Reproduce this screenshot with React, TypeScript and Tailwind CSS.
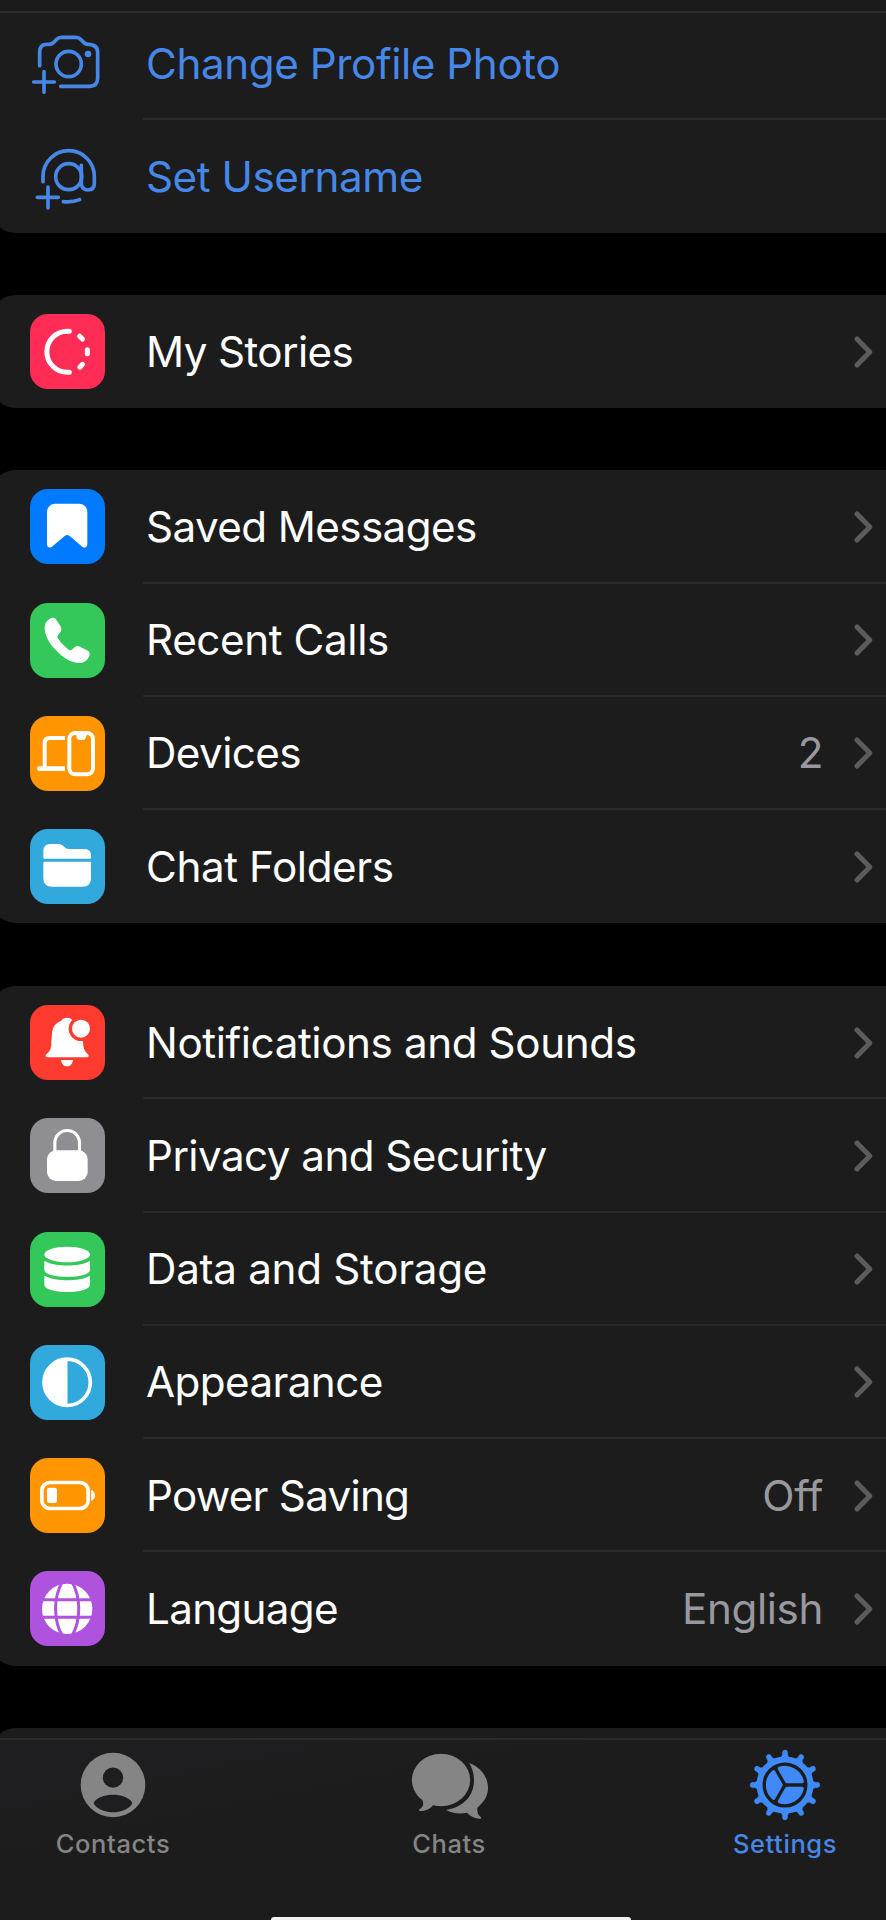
import type { ReactNode } from "react";

const Tile = ({ color, children }: { color: string; children: ReactNode }) => (
  <span className={`block size-[75px] shrink-0 overflow-hidden rounded-[18px] ${color}`}>
    <svg viewBox="0 0 225 225" className="size-full" fill="white">
      {children}
    </svg>
  </span>
);

const CameraPlus = () => (
  <svg viewBox="90 76 225 225" className="size-[75px] shrink-0" fill="none" stroke="#4687e8" strokeWidth="11" strokeLinecap="round" strokeLinejoin="round">
    <path d="M119 195V154C119 139 126 131 140 131H147C155 131 158 129 162 124L170 116C174 112 178 110 184 110H228C234 110 238 112 242 116L250 124C254 129 258 131 265 131C283 131 293 140 293 156V232C293 248 284 257 268 257H182" />
    <circle cx="206" cy="190" r="38" />
    <circle cx="264" cy="160" r="10" fill="#4687e8" stroke="none" />
    <path d="M132 213V275M101 244H163" />
  </svg>
);

const AtPlus = () => (
  <svg viewBox="90 417 225 225" className="size-[75px] shrink-0" fill="none" stroke="#4687e8" strokeWidth="11" strokeLinecap="round" strokeLinejoin="round">
    <path d="M129 545V529A77 77 0 0 1 283 529V550C283 563 276 570 264 570C252 570 244 562 244 550V496" />
    <circle cx="206" cy="530" r="39" />
    <path d="M190 605Q216 608 239 599" />
    <path d="M144 561V624M112 592H175" />
  </svg>
);

const Stories = () => (
  <Tile color="bg-[#ff2d55]">
    <path d="M118 51.500H112A61.500 61.500 0 0 0 112 174.500H118M149 66.500L157.500 75M172 107V119M157.500 151L149.500 159.500" fill="none" stroke="white" strokeWidth="15" strokeLinecap="round" />
  </Tile>
);

const Saved = () => (
  <Tile color="bg-[#007aff]">
    <path d="M77 44H147A25 25 0 0 1 172 69V166C172 175 164 179 157 173L119 141Q111 135 104 141L66 173C59 179 51 175 51 166V69A25 25 0 0 1 77 44Z" />
  </Tile>
);

const Calls = () => (
  <Tile color="bg-[#34c759]">
    <path d="M60 47C66 43 74 44 79 50L91 69C95 76 95 83 91 88L84 97C82 100 82 103 84 106C92 119 103 130 116 140C119 142 122 142 125 140L134 133C139 129 144 128 150 131L171 142C179 146 181 152 178 158C172 173 160 181 144 180C122 178 100 166 78 142C56 119 44 96 44 74C44 61 50 52 60 47Z" />
  </Tile>
);

const Devices = () => (
  <Tile color="bg-[#ff9500]">
    <g fill="none" stroke="white" strokeWidth="12">
      <path d="M105 66H59Q44 66 44 81V157" />
      <rect x="118" y="51" width="71" height="124" rx="18" />
    </g>
    <path d="M105 151H28C19 151 19 165 28 165H105ZM135 52H173C168 54 170 72 160 72H148C138 72 140 54 135 52Z" />
  </Tile>
);

const Folders = () => (
  <Tile color="bg-[#32a9dc]">
    <path d="M40 86V67C40 52 48 45 62 45H84C90 45 95 47 99 50L106 56Q110 60 118 60H163C176 60 183 67 183 79V86Q183 89 180 89H43Q40 89 40 86Z" />
    <path d="M43 98H180Q183 98 183 101V146C183 164 174 173 156 173H67C49 173 40 164 40 146V101Q40 98 43 98Z" />
  </Tile>
);

const Bell = () => (
  <Tile color="bg-[#ff3b30]">
    <path d="M54 157C46 157 45 151 50 147C61 138 64 130 64 112L66 86C67 67 76 54 93 48C97 41 104 38 111 38C118 38 125 41 129 48C147 54 156 67 157 86L159 112C160 130 163 138 173 147C178 151 177 157 169 157Z" />
    <circle cx="153" cy="71" r="37" fill="#ff3b30" />
    <circle cx="153" cy="71" r="27" />
    <path d="M93 165H129C127 177 121 184 111 184C101 184 95 177 93 165Z" />
  </Tile>
);

const Lock = () => (
  <Tile color="bg-[#8e8e93]">
    <path d="M74.500 104V74.500A37 37 0 0 1 148.500 74.500V104" fill="none" stroke="white" strokeWidth="9.500" />
    <rect x="51" y="97" width="122" height="92" rx="27" />
  </Tile>
);

const Database = () => (
  <Tile color="bg-[#34c759]">
    <ellipse cx="111.500" cy="67.500" rx="68.500" ry="23.500" />
    <path d="M43 90C43 84 48 88 52 91C80 104 144 104 172 91C176 88 180 84 180 90V114C180 126 150 135 112 135C74 135 43 126 43 114Z" />
    <path d="M43 134C43 128 48 132 52 135C80 148 144 148 172 135C176 132 180 128 180 134V158C180 171 150 180 112 180C74 180 43 171 43 158Z" />
  </Tile>
);

const Appearance = () => (
  <Tile color="bg-[#32a9dc]">
    <circle cx="111.500" cy="112" r="69.500" fill="none" stroke="white" strokeWidth="11" />
    <path d="M112.500 42A70 70 0 0 0 112.500 182Z" />
  </Tile>
);

const Battery = () => (
  <Tile color="bg-[#ff9500]">
    <rect x="35.500" y="73.500" width="139" height="78" rx="24" fill="none" stroke="white" strokeWidth="11" />
    <rect x="51" y="89" width="30" height="46" rx="7" />
    <path d="M183 95C191 98 195 104 195 112C195 120 191 126 183 129Z" />
  </Tile>
);

const Globe = () => (
  <Tile color="bg-[#af52de]">
    <circle cx="111.500" cy="113.500" r="75.500" />
    <g fill="none" stroke="#af52de" strokeWidth="9">
      <path d="M30 86.500H193M30 138.500H193M97 32C70 78 70 149 97 195M126 32C153 78 153 149 126 195" />
    </g>
  </Tile>
);

type Item = { icon: ReactNode; label: string; value?: string; tracking: string };

const Chevron = () => (
  <svg viewBox="0 0 19 32" className="h-8 w-[19px] shrink-0" fill="none" stroke="#5c5c5e" strokeWidth="5" strokeLinecap="round" strokeLinejoin="round">
    <path d="M3 3L15.800 16L3 29" />
  </svg>
);

const Row = ({ icon, label, value, tracking, last }: Item & { last: boolean }) => (
  <div className="flex h-[113.250px] pl-10">
    <div className="flex w-[113px] items-center">{icon}</div>
    <div className={`flex flex-1 items-center pr-[13px] pl-[3px] ${last ? "" : "border-b-2 border-[#2a2a2b] pt-[2px]"}`}>
      <span className={`flex-1 whitespace-nowrap text-white ${tracking}`}>{label}</span>
      {value && <span className="mr-[31px] tracking-[-0.4px] text-[#98989e]">{value}</span>}
      <Chevron />
    </div>
  </div>
);

const Group = ({ items }: { items: Item[] }) => (
  <section className="-ml-[10px] shrink-0 rounded-l-[26px] bg-[#1c1c1c]">
    {items.map((item, i) => (
      <Row key={item.label} {...item} last={i === items.length - 1} />
    ))}
  </section>
);

const library: Item[] = [
  { icon: <Saved />, label: "Saved Messages", tracking: "tracking-[-0.6px]" },
  { icon: <Calls />, label: "Recent Calls", tracking: "tracking-[-0.4px]" },
  { icon: <Devices />, label: "Devices", value: "2", tracking: "tracking-[-0.6px]" },
  { icon: <Folders />, label: "Chat Folders", tracking: "tracking-[-0.4px]" },
];

const preferences: Item[] = [
  { icon: <Bell />, label: "Notifications and Sounds", tracking: "tracking-[-0.4px]" },
  { icon: <Lock />, label: "Privacy and Security", tracking: "tracking-[-0.56px]" },
  { icon: <Database />, label: "Data and Storage", tracking: "tracking-[-0.3px]" },
  { icon: <Appearance />, label: "Appearance", tracking: "tracking-[-0.6px]" },
  { icon: <Battery />, label: "Power Saving", value: "Off", tracking: "tracking-[-0.75px]" },
  { icon: <Globe />, label: "Language", value: "English", tracking: "tracking-[-0.7px]" },
];

const ContactsIcon = () => (
  <svg viewBox="213 144 252 216" className="h-[72px] w-[84px]">
    <circle cx="339" cy="252" r="97" fill="#858585" />
    <circle cx="339" cy="230" r="30.500" fill="#1e1e20" />
    <path d="M283 302C304 274 374 274 395 302Q399 307 394 312C368 341 310 341 284 312Q279 307 283 302Z" fill="#1e1e20" />
  </svg>
);

const ChatsIcon = () => (
  <svg viewBox="321 144 252 216" className="h-[72px] w-[84px]" fill="#858585">
    <ellipse cx="423" cy="237" rx="87.500" ry="79" />
    <path d="M364 290C374 308 370 318 358 325C355 329 359 331 366 330C382 329 392 321 400 312Z" />
    <path d="M508 186C544 200 564 228 564 262C564 284 552 304 532 320C531 334 534 343 543 349C545 353 542 354 536 353C522 352 510 344 501 335C480 340 456 337 438 327C492 318 522 284 522 237C522 218 516 200 508 186Z" />
  </svg>
);

const teeth = [0, 30, 60, 90, 120, 150, 180, 210, 240, 270, 300, 330];

const SettingsIcon = () => (
  <svg viewBox="-126 -108 252 216" className="h-[72px] w-[84px]" fill="#3f8af7" stroke="#3f8af7">
    <circle r="76.500" fill="none" strokeWidth="18" />
    {teeth.map((a) => (
      <path key={a} d="M82 -13L90 -8H98Q105 -7 105 0Q105 7 98 8H90L82 13Z" strokeWidth="1" transform={`rotate(${a})`} />
    ))}
    {[60, 180, 300].map((a) => (
      <path key={a} d="M12.100 0L34.500 -38.900A52 52 0 0 1 34.500 38.900Z" strokeWidth="11" strokeLinejoin="round" transform={`rotate(${a})`} />
    ))}
  </svg>
);

const Tab = ({ icon, label, color }: { icon: ReactNode; label: string; color: string }) => (
  <div className={`flex w-40 flex-col items-center text-[25.500px] leading-[30px] font-medium tracking-[0.6px] ${color}`}>
    {icon}
    <span className="mt-[8px]">{label}</span>
  </div>
);

export default function App() {
  return (
    <main className="flex h-[1920px] w-[886px] flex-col overflow-hidden bg-black font-['Inter',sans-serif] text-[42.200px] leading-[52px]">
      <header className="h-[13px] shrink-0 border-b-2 border-[#2e2e2e] bg-[#1b1b1b]" />
      <section className="-ml-[10px] h-[220px] shrink-0 rounded-bl-[26px] bg-[#1c1c1c] text-[#4687e8]">
        <div className="flex h-[107px] pl-10">
          <div className="flex w-[113px] items-center pb-[6px]">
            <CameraPlus />
          </div>
          <div className="flex flex-1 items-center border-b-2 border-[#2a2a2b] pb-[4px] pl-[3px]">
            <span className="tracking-[-0.42px]">Change Profile Photo</span>
          </div>
        </div>
        <div className="flex h-[113px] items-center pl-10">
          <div className="w-[113px]">
            <AtPlus />
          </div>
          <span className="pl-[3px] tracking-[-0.45px]">Set Username</span>
        </div>
      </section>
      <div className="h-[62px] shrink-0" />
      <Group items={[{ icon: <Stories />, label: "My Stories", tracking: "tracking-[-0.6px]" }]} />
      <div className="h-[62px] shrink-0" />
      <Group items={library} />
      <div className="h-[62.750px] shrink-0" />
      <Group items={preferences} />
      <div className="h-[62px] shrink-0" />
      <div className="-mb-[21px] -ml-[10px] h-[31px] shrink-0 rounded-tl-[26px] bg-[#1c1c1c]" />
      <nav className="flex flex-1 flex-col justify-between border-t-2 border-[#2b2b2c] bg-[#1d1d1d] bg-linear-to-br from-[#1f1f22] to-[#1c1c1c] to-40%">
        <div className="flex justify-between pt-[9px] pr-[21px] pl-[33px]">
          <Tab icon={<ContactsIcon />} label="Contacts" color="text-[#858585]" />
          <Tab icon={<ChatsIcon />} label="Chats" color="text-[#858585]" />
          <Tab icon={<SettingsIcon />} label="Settings" color="text-[#4687e8]" />
        </div>
        <div className="ml-[271px] h-[3px] w-[360px] rounded-t-[5px] bg-[#f2f2f2]" />
      </nav>
    </main>
  );
}
